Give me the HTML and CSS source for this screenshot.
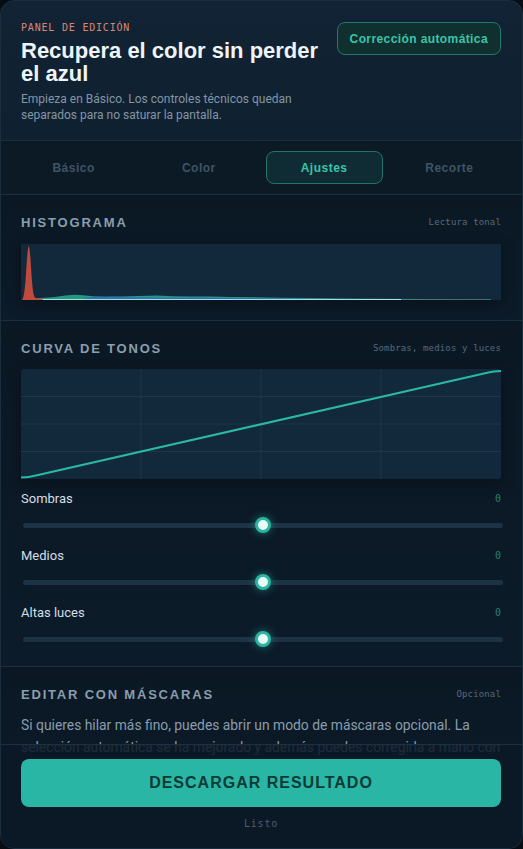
FILE: index.html
```html
<!DOCTYPE html>
<html lang="es">
<head>
    <meta charset="UTF-8">
    <meta name="viewport" content="width=device-width, initial-scale=1.0">
    <title>Panel de edición</title>
    <link rel="stylesheet" href="styles.css">
</head>
<body>

<div class="panel">
    <div class="panel-header">
        <div class="header-text">
            <div class="eyebrow">PANEL DE EDICIÓN</div>
            <h1>Recupera el color sin perder el azul</h1>
            <p class="subtitle">Empieza en Básico. Los controles técnicos quedan separados para no saturar la pantalla.</p>
        </div>
        <button class="auto-btn">Corrección automática</button>
    </div>

    <div class="tabs">
        <div class="tab">Básico</div>
        <div class="tab">Color</div>
        <div class="tab active">Ajustes</div>
        <div class="tab">Recorte</div>
    </div>

    <div class="section">
        <div class="section-head">
            <h2>HISTOGRAMA</h2>
            <span class="hint">Lectura tonal</span>
        </div>
        <div class="chart histo">
            <svg viewBox="0 0 480 56" preserveAspectRatio="none">
                <path d="M14,56 L16,54.3 L24,53.8 L34,53 L44,51.6 L54,50.8 L62,51.2 L72,52.2 L84,52.8 L100,52.6 L118,52 L136,51.6 L152,52.2 L170,52.6 L190,52.4 L210,53 L235,53.3 L260,53.8 L290,54 L320,54.4 L360,54.7 L400,55 L440,55.2 L470,55.3 L470,56 Z" fill="#2aa38c" opacity="0.9"/>
                <path d="M60,56 L66,53.6 L76,52.8 L90,52.4 L104,53 L124,53.6 L150,53.8 L180,53.6 L210,54 L250,54.3 L290,54.7 L330,55 L370,55.3 L390,56 Z" fill="#2f6bb8" opacity="0.8"/>
                <path d="M380,56 L400,55.3 L440,55.4 L465,55.6 L470,56 Z" fill="#9a5060" opacity="0.5"/>
                <rect x="10" y="55" width="370" height="1" fill="#b8eef2" opacity="0.85"/>
                <path d="M1,56 C3,54 4,44 5,30 C6,14 6.8,3 7.8,2 C8.8,3 9.6,16 10.6,32 C11.6,46 12.6,52 14,53.6 C16,54.6 19,55 22,55.3 L22,56 Z" fill="#c04a3e"/>
            </svg>
        </div>
    </div>

    <div class="section">
        <div class="section-head">
            <h2>CURVA DE TONOS</h2>
            <span class="hint">Sombras, medios y luces</span>
        </div>
        <div class="chart curve">
            <svg viewBox="0 0 480 110" preserveAspectRatio="none">
                <line x1="120" y1="0" x2="120" y2="110" stroke="#1d3649" stroke-width="1"/>
                <line x1="240" y1="0" x2="240" y2="110" stroke="#1d3649" stroke-width="1"/>
                <line x1="360" y1="0" x2="360" y2="110" stroke="#1d3649" stroke-width="1"/>
                <line x1="0" y1="27.5" x2="480" y2="27.5" stroke="#1d3649" stroke-width="1"/>
                <line x1="0" y1="55" x2="480" y2="55" stroke="#1d3649" stroke-width="1"/>
                <line x1="0" y1="82.5" x2="480" y2="82.5" stroke="#1d3649" stroke-width="1"/>
                <path d="M0,108.5 C6,108.5 10,107.8 16,106.3 L464,4.3 C470,2.9 475,2 480,2" fill="none" stroke="#2bb8a3" stroke-width="2.2"/>
            </svg>
        </div>

        <div class="sliders">
            <div class="slider-row">
                <div class="slider-label"><span>Sombras</span><span class="value">0</span></div>
                <div class="slider"><div class="track"></div><div class="thumb" style="left: 50%;"></div></div>
            </div>
            <div class="slider-row">
                <div class="slider-label"><span>Medios</span><span class="value">0</span></div>
                <div class="slider"><div class="track"></div><div class="thumb" style="left: 50%;"></div></div>
            </div>
            <div class="slider-row">
                <div class="slider-label"><span>Altas luces</span><span class="value">0</span></div>
                <div class="slider"><div class="track"></div><div class="thumb" style="left: 50%;"></div></div>
            </div>
        </div>
    </div>

    <div class="section masks">
        <div class="section-head">
            <h2>EDITAR CON MÁSCARAS</h2>
            <span class="hint">Opcional</span>
        </div>
        <p class="masks-text">Si quieres hilar más fino, puedes abrir un modo de máscaras opcional. La selección automática se ha mejorado y además puedes corregirla a mano con el pincel cuando lo necesites.</p>
    </div>

    <div class="panel-footer">
        <button class="download-btn">DESCARGAR RESULTADO</button>
        <div class="status">Listo</div>
    </div>
</div>

</body>
</html>
```

FILE: styles.css
```css
body {
    margin: 0;
    padding: 0;
    background-color: #070d13;
    font-family: "Liberation Sans", Arial, sans-serif;
}

.panel {
    position: relative;
    height: 849px;
    box-sizing: border-box;
    border: 1px solid #1a2e3e;
    border-radius: 14px;
    overflow: hidden;
    background: linear-gradient(180deg, #112334 0%, #0d1c2a 40%, #0c1b29 100%);
}

/* header */

.panel-header {
    display: flex;
    align-items: flex-start;
    gap: 16px;
    padding: 20px 21px 17px 20px;
    border-bottom: 1px solid #1a2f40;
}

.header-text {
    flex: 1;
}

.eyebrow {
    font-family: "DejaVu Sans Mono", monospace;
    font-size: 10px;
    line-height: 14px;
    letter-spacing: 0.8px;
    color: #d98877;
}

h1 {
    margin: 4px 0 0;
    font-size: 22px;
    line-height: 23px;
    font-weight: bold;
    color: #eef4f8;
}

.subtitle {
    margin: 6px 0 0;
    font-family: Roboto, sans-serif;
    font-size: 12px;
    line-height: 16px;
    color: #8396a6;
}

.auto-btn {
    margin-top: 1px;
    height: 33px;
    padding: 0 12px;
    border: 1px solid #22786d;
    border-radius: 8px;
    background: #10302f;
    color: #3cc4a8;
    font-family: "Liberation Sans", Arial, sans-serif;
    font-size: 12px;
    font-weight: bold;
    letter-spacing: 0.4px;
    white-space: nowrap;
}

/* tabs */

.tabs {
    display: grid;
    grid-template-columns: repeat(4, 1fr);
    gap: 8px;
    padding: 10px 14px;
    background: #0c1a26;
    border-bottom: 1px solid #1a2f40;
}

.tab {
    height: 33px;
    box-sizing: border-box;
    display: flex;
    align-items: center;
    justify-content: center;
    border: 1px solid transparent;
    border-radius: 8px;
    font-size: 12px;
    font-weight: bold;
    letter-spacing: 0.5px;
    color: #3e5465;
}

.tab.active {
    background: #0f2c35;
    border-color: #22746a;
    color: #3cc4a8;
}

/* sections */

.section {
    padding: 19px 21px 20px 20px;
    border-bottom: 1px solid #1a2f40;
    background: linear-gradient(180deg, #0b1824 0%, #0c1b29 100%);
}

.section-head {
    display: flex;
    justify-content: space-between;
    align-items: center;
    height: 16px;
}

h2 {
    margin: 0;
    font-size: 13px;
    font-weight: bold;
    letter-spacing: 1.8px;
    color: #8a9eae;
}

.hint {
    font-family: "DejaVu Sans Mono", monospace;
    font-size: 9px;
    letter-spacing: 0.15px;
    color: #566a7a;
}

.chart {
    background: #12283b;
    box-shadow: 0 4px 14px rgba(0, 0, 0, 0.35);
}

.chart svg {
    display: block;
    width: 100%;
    height: 100%;
}

.histo {
    margin-top: 14px;
    height: 56px;
}

.curve {
    margin-top: 13px;
    height: 110px;
    border-radius: 3px;
}

/* sliders */

.sliders {
    margin-top: 10px;
    margin-bottom: -9px;
}

.slider-row {
    margin-bottom: 5px;
}

.slider-row:last-child {
    margin-bottom: 0;
}

.slider-label {
    display: flex;
    justify-content: space-between;
    align-items: center;
    height: 18px;
    font-family: Roboto, sans-serif;
    font-size: 13px;
    color: #d3dee7;
}

.value {
    font-family: "DejaVu Sans Mono", monospace;
    font-size: 10px;
    color: #23807a;
}

.slider {
    position: relative;
    height: 34px;
    margin: 0 -2px 0 2px;
}

.track {
    position: absolute;
    left: 0;
    right: 0;
    top: 16px;
    height: 5px;
    border-radius: 3px;
    background: #1c3346;
}

.thumb {
    position: absolute;
    top: 10px;
    width: 16px;
    height: 16px;
    margin-left: -8px;
    box-sizing: border-box;
    border: 3px solid #2ab5a2;
    border-radius: 50%;
    background: #e8fbf7;
    box-shadow: 0 0 8px rgba(42, 181, 162, 0.6);
}

/* masks */

.masks {
    border-bottom: none;
}

.masks-text {
    margin: 12px 0 0;
    font-family: Roboto, sans-serif;
    font-size: 13.85px;
    line-height: 22px;
    color: #8a9dad;
}

/* footer */

.panel-footer {
    position: absolute;
    left: 0;
    right: 0;
    bottom: 0;
    padding: 14px 21px 17px 20px;
    border-top: 1px solid #1b3041;
    background: rgba(12, 26, 39, 0.86);
    text-align: center;
}

.download-btn {
    display: block;
    width: 100%;
    height: 48px;
    border: none;
    border-radius: 8px;
    background: #2ab6a5;
    color: #0c3a35;
    font-family: "Liberation Sans", Arial, sans-serif;
    font-size: 16px;
    font-weight: bold;
    letter-spacing: 1px;
}

.status {
    margin-top: 10px;
    font-family: "DejaVu Sans Mono", monospace;
    font-size: 10px;
    line-height: 14px;
    letter-spacing: 0.8px;
    color: #4a5f6f;
}
```
